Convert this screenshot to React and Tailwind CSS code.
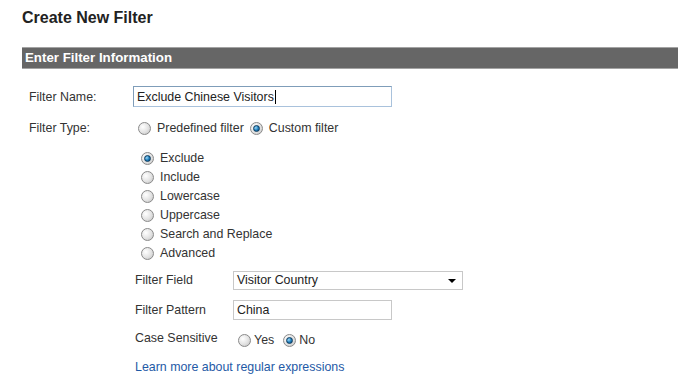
function Radio({ checked }) {
  return (
    <span className="relative inline-flex h-[13px] w-[13px] shrink-0 items-center justify-center rounded-full border border-[#8a8a8a] bg-[radial-gradient(circle_at_35%_35%,#ffffff_0%,#e2e2e2_55%,#bdbdbd_100%)]">
      {checked && (
        <span className="h-[7px] w-[7px] rounded-full border border-[#0d3a5c] bg-[radial-gradient(circle_at_35%_35%,#9ad8f8_0%,#1a79b8_55%,#0b4a78_100%)]" />
      )}
    </span>
  );
}

function RadioOption({ checked, label, gap = "gap-[6px]" }) {
  return (
    <label className={`flex items-center ${gap}`}>
      <Radio checked={checked} />
      <span>{label}</span>
    </label>
  );
}

export default function App() {
  const actions = [
    { label: "Exclude", checked: true },
    { label: "Include" },
    { label: "Lowercase" },
    { label: "Uppercase" },
    { label: "Search and Replace" },
    { label: "Advanced" },
  ];

  return (
    <div className="min-h-screen bg-white font-['Liberation_Sans',Arial,sans-serif] text-[12.4px] text-[#333]">
      <div className="pl-[22px] pt-[8px]">
        <h1 className="text-[16px] font-bold leading-[20px] text-[#222]">Create New Filter</h1>
        <div className="mt-[19px] h-[22px] border-y border-[#a3a3a3] bg-[#666666] pl-[3px] text-[13.3px] font-bold leading-[20px] text-white">
          Enter Filter Information
        </div>

        <div className="mt-[17px] flex items-center">
          <div className="w-[111px] pl-[7px] pt-px">Filter Name:</div>
          <div className="flex h-[21px] w-[259px] items-center border border-[#a9c2dc] border-t-[#7f9db9] border-l-[#7f9db9] px-[3px] pt-px text-[#222]">
            Exclude Chinese Visitors
            <span className="ml-px h-[14px] w-px bg-black" />
          </div>
        </div>

        <div className="mt-[13px] flex h-[16px] items-center">
          <div className="w-[111px] pl-[7px]">Filter Type:</div>
          <div className="ml-[5px] flex items-center gap-[6px]">
            <RadioOption label="Predefined filter" />
            <RadioOption checked label="Custom filter" />
          </div>
        </div>

        <div className="ml-[111px]">
          <div className="mt-[13px] pl-[8px]">
            {actions.map((a) => (
              <div key={a.label} className="flex h-[19px] items-center">
                <RadioOption checked={a.checked} label={a.label} />
              </div>
            ))}
          </div>

          <div className="mt-[8px] flex items-center">
            <div className="w-[100px] pl-[2px]">Filter Field</div>
            <div className="flex h-[19px] w-[230px] items-center justify-between border border-[#c8c8c8] pl-[3px] pr-[6px] text-[#222]">
              <span>Visitor Country</span>
              <span className="h-0 w-0 border-x-[4px] border-t-[4px] border-x-transparent border-t-black" />
            </div>
          </div>

          <div className="mt-[10px] flex items-center">
            <div className="w-[100px] pl-[2px]">Filter Pattern</div>
            <div className="flex h-[20px] w-[159px] items-center border border-[#c8c8c8] px-[3px] text-[#222]">China</div>
          </div>

          <div className="mt-[10px] flex h-[16px] items-center">
            <div className="w-[100px] pl-[2px]">Case Sensitive</div>
            <div className="ml-[5px] flex items-center gap-[9px] pt-[4px]">
              <RadioOption label="Yes" gap="gap-[3px]" />
              <RadioOption checked label="No" gap="gap-[3px]" />
            </div>
          </div>

          <div className="mt-[13px] pl-[2px] leading-[16px]">
            <a href="#" className="text-[#1f5aa6]">Learn more about regular expressions</a>
          </div>
        </div>
      </div>
    </div>
  );
}
